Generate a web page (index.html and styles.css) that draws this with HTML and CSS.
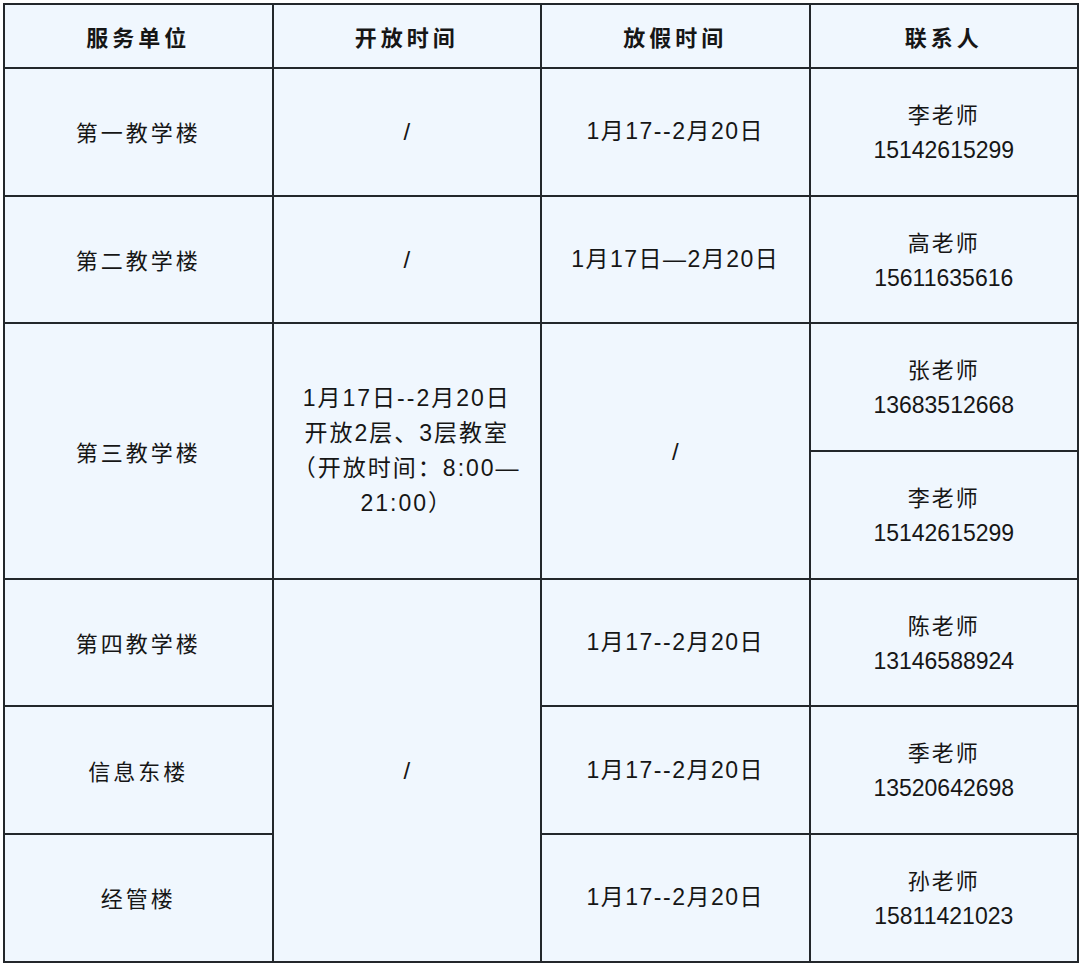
FILE: index.html
```html
<!DOCTYPE html>
<html lang="zh-CN">
<head>
<meta charset="utf-8">
<title>寒假教学楼开放安排</title>
<link rel="stylesheet" href="styles.css">
</head>
<body>
<table class="schedule">
  <thead>
    <tr class="head-row">
      <th>服务单位</th>
      <th>开放时间</th>
      <th>放假时间</th>
      <th>联系人</th>
    </tr>
  </thead>
  <tbody>
    <tr>
      <td class="unit">第一教学楼</td>
      <td class="slash">/</td>
      <td class="date">1月17--2月20日</td>
      <td><span class="name">李老师</span><br>15142615299</td>
    </tr>
    <tr>
      <td class="unit">第二教学楼</td>
      <td class="slash">/</td>
      <td class="date">1月17日—2月20日</td>
      <td><span class="name">高老师</span><br>15611635616</td>
    </tr>
    <tr>
      <td class="unit" rowspan="2">第三教学楼</td>
      <td class="open" rowspan="2">1月17日--2月20日<br>开放2层、3层教室<br>（开放时间：8:00—<br>21:00）</td>
      <td class="slash" rowspan="2">/</td>
      <td><span class="name">张老师</span><br>13683512668</td>
    </tr>
    <tr>
      <td><span class="name">李老师</span><br>15142615299</td>
    </tr>
    <tr>
      <td class="unit">第四教学楼</td>
      <td class="slash" rowspan="3">/</td>
      <td class="date">1月17--2月20日</td>
      <td><span class="name">陈老师</span><br>13146588924</td>
    </tr>
    <tr>
      <td class="unit">信息东楼</td>
      <td class="date">1月17--2月20日</td>
      <td><span class="name">季老师</span><br>13520642698</td>
    </tr>
    <tr>
      <td class="unit">经管楼</td>
      <td class="date">1月17--2月20日</td>
      <td><span class="name">孙老师</span><br>15811421023</td>
    </tr>
  </tbody>
</table>
</body>
</html>
```
FILE: styles.css
```css
html, body {
  margin: 0;
  padding: 0;
  background: #ffffff;
}
body {
  padding: 3px;
}
.schedule {
  width: 1076px;
  border-collapse: collapse;
  table-layout: fixed;
  background: #f0f7fe;
  color: #161616;
  font-family: "Liberation Sans", "Noto Sans CJK SC", sans-serif;
  font-size: 23px;
}
.schedule th,
.schedule td {
  border: 2px solid #23272b;
  text-align: center;
  vertical-align: middle;
  padding: 0 4px;
  line-height: 35px;
}
.schedule th {
  height: 62px;
  font-family: "Noto Sans CJK SC", sans-serif;
  font-weight: 700;
  font-size: 22px;
  letter-spacing: 4px;
}
.schedule tbody tr {
  height: 127.7px;
}
.unit {
  font-family: "Noto Sans CJK SC", sans-serif;
  font-size: 22px;
  letter-spacing: 3px;
}
.name {
  font-family: "Noto Sans CJK SC", sans-serif;
  font-size: 22px;
  letter-spacing: 2px;
}
.date {
  letter-spacing: 1.5px;
}
.slash {
  font-size: 24px;
}
.open {
  line-height: 34px;
  letter-spacing: 2px;
  padding: 0;
}
```
